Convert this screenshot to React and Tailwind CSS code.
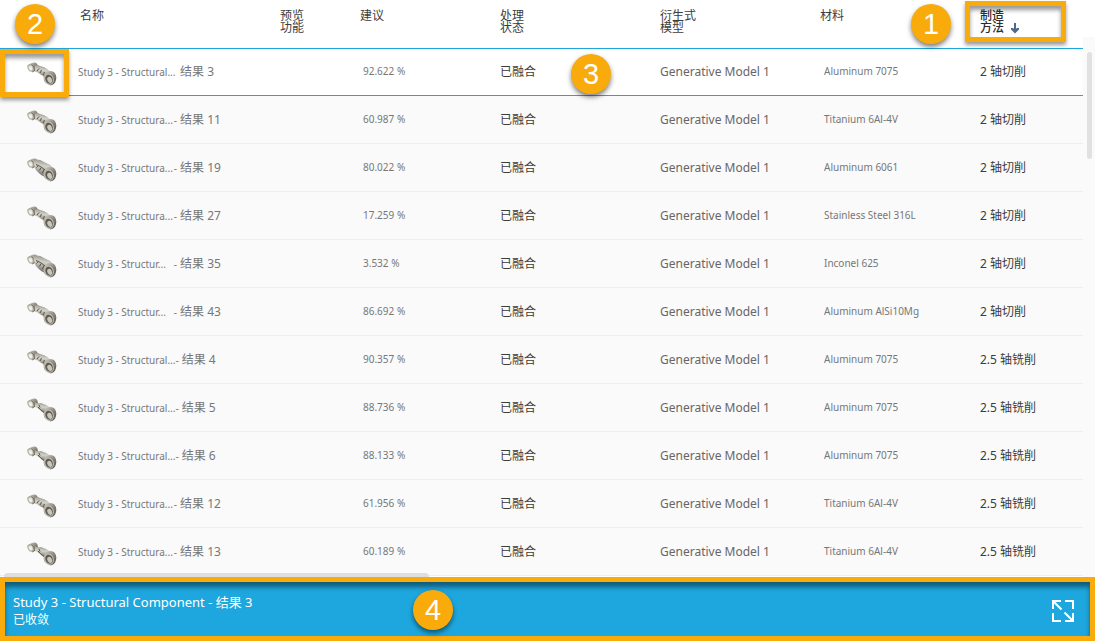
import React, { useState } from 'react';
import { clsx } from 'clsx';

// --- Data ---
const columns = [
    { key: 'thumb', lines: [], width: 'w-[78px]' },
    { key: 'name', lines: ['名称'], width: 'w-[202px]' },
    { key: 'preview', lines: ['预览', '功能'], width: 'w-[80px]' },
    { key: 'recommendation', lines: ['建议'], width: 'w-[140px]' },
    { key: 'status', lines: ['处理', '状态'], width: 'w-[160px]' },
    { key: 'model', lines: ['衍生式', '模型'], width: 'w-[160px]' },
    { key: 'material', lines: ['材料'], width: 'w-[160px]' },
    { key: 'method', lines: ['制造', '方法'], width: '' },
];

const outcomes = [
    { id: 3, study: 'Study 3 - Structural...', dash: '', score: '92.622 %', material: 'Aluminum 7075', method: '2 轴切削', shape: 'thin' },
    { id: 11, study: 'Study 3 - Structura...', dash: '-', score: '60.987 %', material: 'Titanium 6Al-4V', method: '2 轴切削', shape: 'thin' },
    { id: 19, study: 'Study 3 - Structura...', dash: '-', score: '80.022 %', material: 'Aluminum 6061', method: '2 轴切削', shape: 'thick' },
    { id: 27, study: 'Study 3 - Structura...', dash: '-', score: '17.259 %', material: 'Stainless Steel 316L', method: '2 轴切削', shape: 'thin' },
    { id: 35, study: 'Study 3 - Structur...', dash: '-', score: '3.532 %', material: 'Inconel 625', method: '2 轴切削', shape: 'thick' },
    { id: 43, study: 'Study 3 - Structur...', dash: '-', score: '86.692 %', material: 'Aluminum AlSi10Mg', method: '2 轴切削', shape: 'thin' },
    { id: 4, study: 'Study 3 - Structural...', dash: '-', score: '90.357 %', material: 'Aluminum 7075', method: '2.5 轴铣削', shape: 'thin' },
    { id: 5, study: 'Study 3 - Structural...', dash: '-', score: '88.736 %', material: 'Aluminum 7075', method: '2.5 轴铣削', shape: 'bar' },
    { id: 6, study: 'Study 3 - Structural...', dash: '-', score: '88.133 %', material: 'Aluminum 7075', method: '2.5 轴铣削', shape: 'bar' },
    { id: 12, study: 'Study 3 - Structura...', dash: '-', score: '61.956 %', material: 'Titanium 6Al-4V', method: '2.5 轴铣削', shape: 'thin' },
    { id: 13, study: 'Study 3 - Structura...', dash: '-', score: '60.189 %', material: 'Titanium 6Al-4V', method: '2.5 轴铣削', shape: 'bar' },
];

// --- Drawings ---
const arms = {
    thin: {
        body: 'M8 3.5 Q11 2.5 13 4 Q18 4.5 21 7.5 L25 12 L18 16.5 Q16 13 13.5 12.5 Q11 10 8 9.5 Z',
        ribs: 'M10 9 L12 6.5 M13 11 L14.5 8 M16 13 L17.5 10',
    },
    thick: {
        body: 'M6 2 Q12 0.5 17 4 Q23 6 27 10.5 L24 15 L17 18.5 Q11 15.5 8 10.5 Z',
        ribs: 'M9.5 9.5 L11.5 7.5 M12.5 12.5 L14 9.5 M15.5 15 L17 11.5 M9 6.5 Q14 8 18 12',
    },
    bar: {
        body: 'M8 4.5 Q12 5.5 14 5 Q20 6.5 25 11 L19 16 Q15 14.5 13 12 Q10 9.5 8 8.5 Z',
        ribs: 'M11 9 Q13 11.5 17 14.5 M12 7 L13 9.5',
    },
};

const PartThumb = ({ shape }) => (
    <svg width="30" height="24" viewBox="0 0 30 24" className="block" aria-hidden="true">
        <defs>
            <linearGradient id="metal-arm" x1="0.6" y1="0" x2="0.4" y2="1">
                <stop offset="0" stopColor="#8f8d84" />
                <stop offset="0.4" stopColor="#d6d4ca" />
                <stop offset="1" stopColor="#6a675e" />
            </linearGradient>
            <linearGradient id="metal-hub" x1="0" y1="0" x2="1" y2="1">
                <stop offset="0" stopColor="#d2d0c8" />
                <stop offset="0.5" stopColor="#8d8a80" />
                <stop offset="1" stopColor="#4d4a41" />
            </linearGradient>
        </defs>
        {/* Small hub, top left */}
        <path d="M1.5 3 Q5 -0.5 9 0.8 Q12 3 10 7.5 L5.5 10.5 Z" fill="url(#metal-hub)" />
        <ellipse cx="3.8" cy="5.8" rx="3.2" ry="4" fill="#b3b1a8" transform="rotate(-30 3.8 5.8)" />
        <ellipse cx="3.6" cy="6.2" rx="1.8" ry="2.4" fill="#eeede8" transform="rotate(-30 3.6 6.2)" />
        <path d="M4.5 2.5 Q7 4 7.5 7.5" stroke="#6f6d64" strokeWidth="0.9" fill="none" />
        <path d={arms[shape].body} fill="url(#metal-arm)" />
        <path d={arms[shape].ribs} stroke="#57544b" strokeWidth="1" fill="none" />
        {/* Large hub, bottom right */}
        <path d="M18 11 Q22 7.5 27 10 Q30 13 29 18 Q28 22.5 23.5 23.5 L17 19 Z" fill="url(#metal-hub)" />
        <ellipse cx="21.8" cy="17" rx="5" ry="6" fill="#b9b6ac" transform="rotate(-25 21.8 17)" />
        <ellipse cx="22.1" cy="17.2" rx="3.6" ry="4.6" fill="#5d5a50" transform="rotate(-25 22.1 17.2)" />
        <ellipse cx="22.7" cy="17.9" rx="2.3" ry="3.1" fill="#c9c6bb" transform="rotate(-25 22.7 17.9)" />
    </svg>
);

const SortArrow = () => (
    <svg width="10" height="12" viewBox="0 0 10 12" aria-hidden="true">
        <path d="M5 1 V10" stroke="#50698a" strokeWidth="2" fill="none" />
        <path d="M1 6 H3 L5 7.5 L7 6 H9 V7.5 L5 11.5 L1 7.5 Z" fill="#50698a" />
    </svg>
);

const ExpandIcon = () => (
    <svg width="22" height="22" viewBox="0 0 22 22" fill="none" stroke="#fff" strokeWidth="2" aria-hidden="true">
        <path d="M1 9 V1 H9 M13 1 H21 V9 M21 13 V21 H13 M9 21 H1 V13" />
        <path d="M1.5 1.5 L9.5 9.5 M12.5 12.5 L20.5 20.5" />
    </svg>
);

const Callout = ({ number, className }) => (
    <span
        className={clsx(
            "absolute z-20 flex size-10 items-center justify-center rounded-full bg-[#f9ab0c] font-['Liberation_Sans',sans-serif] text-[29px] leading-none text-white shadow-[0_3px_5px_rgba(0,0,0,0.5)]",
            className,
        )}
    >
        {number}
    </span>
);

// --- Table ---
const OutcomeRow = ({ outcome, selected, onSelect }) => (
    <tr
        onClick={onSelect}
        className={clsx(
            'cursor-pointer text-xs text-[#3c3c3c] *:border-b',
            selected ? 'h-[47px] bg-white *:border-[#1ea7de]' : 'h-12 bg-[#fafafa] *:border-[#eeeeee]',
        )}
    >
        <td className="relative pt-1 pl-[27px]">
            <PartThumb shape={outcome.shape} />
            {selected && (
                <span className="absolute inset-x-0 top-0 mr-[9px] h-12 border-5 border-[#f9ab0c] shadow-[0_3px_4px_rgba(0,0,0,0.4),inset_0_4px_4px_rgba(0,0,0,0.4)]" />
            )}
        </td>
        <td className="whitespace-nowrap text-[#777]">
            <div className="flex items-baseline gap-[3px]">
                <span className="flex min-w-[99px] justify-between text-[10px]">
                    <span>{outcome.study}</span>
                    <span>{outcome.dash}</span>
                </span>
                <span>结果 {outcome.id}</span>
            </div>
        </td>
        <td />
        <td className="pl-[3px] text-[10px] text-[#777]">{outcome.score}</td>
        <td>已融合</td>
        <td className="text-[#666]">Generative Model 1</td>
        <td className="pl-1 text-[10px] text-[#777]">{outcome.material}</td>
        <td>{outcome.method}</td>
    </tr>
);

const App = () => {
    const [selectedId, setSelectedId] = useState(3);

    return (
        <div className="relative flex h-screen flex-col overflow-hidden bg-white font-['Noto_Sans','Noto_Sans_CJK_SC',sans-serif]">
            <div className="relative flex min-h-0 flex-1">
                <table className="h-fit min-w-0 flex-1 table-fixed border-separate border-spacing-0">
                    <thead>
                        <tr className="h-[49px] align-top text-xs leading-3 text-[#3c3c3c]">
                            {columns.map(col => (
                                <th key={col.key} className={clsx('border-b border-[#1ea7de] pt-[10px] text-left font-normal', col.width, col.key === 'name' && 'pl-0.5')}>
                                    {col.key === 'method' ? (
                                        <button type="button" className="relative block text-left font-medium text-[#2c2c2c]">
                                            {col.lines[0]}
                                            <span className="flex items-center gap-1.5">{col.lines[1]} <SortArrow /></span>
                                            <span className="absolute -top-[9px] -left-[15px] h-[41px] w-[101px] border-5 border-[#f9ab0c] shadow-[0_3px_4px_rgba(0,0,0,0.4),inset_0_4px_4px_rgba(0,0,0,0.4)]" />
                                        </button>
                                    ) : (
                                        col.lines.map(line => <div key={line}>{line}</div>)
                                    )}
                                </th>
                            ))}
                        </tr>
                    </thead>
                    <tbody>
                        {outcomes.map(outcome => (
                            <OutcomeRow
                                key={outcome.id}
                                outcome={outcome}
                                selected={outcome.id === selectedId}
                                onSelect={() => setSelectedId(outcome.id)}
                            />
                        ))}
                    </tbody>
                </table>

                {/* Vertical scrollbar */}
                <div className="mt-[37px] w-3 bg-[#fafafa] pt-[15px] pl-1">
                    <div className="h-[107px] w-[5px] rounded-sm bg-[#e1e1e1]" />
                </div>

                {/* Horizontal scrollbar */}
                <div className="absolute bottom-0 left-1 h-1 w-[425px] rounded-t-sm bg-[#dedede]" />

                <Callout number="2" className="top-1 left-[15px]" />
                <Callout number="1" className="top-1 left-[911px]" />
                <Callout number="3" className="top-[54px] left-[571px]" />
            </div>

            <footer className="relative flex h-16 items-center justify-between border-5 border-[#f9ab0c] bg-[#1ea7de] pt-1 pr-4 pl-2 text-white shadow-[inset_0_5px_5px_rgba(0,0,0,0.45)]">
                <div>
                    <h2 className="text-[13px] leading-[18px]">Study 3 - Structural Component - 结果 3</h2>
                    <p className="text-xs leading-[18px]">已收敛</p>
                </div>
                <Callout number="4" className="top-[8px] left-[408px]" />
                <button type="button" aria-label="展开" className="cursor-pointer">
                    <ExpandIcon />
                </button>
            </footer>
        </div>
    );
};

export default App;
